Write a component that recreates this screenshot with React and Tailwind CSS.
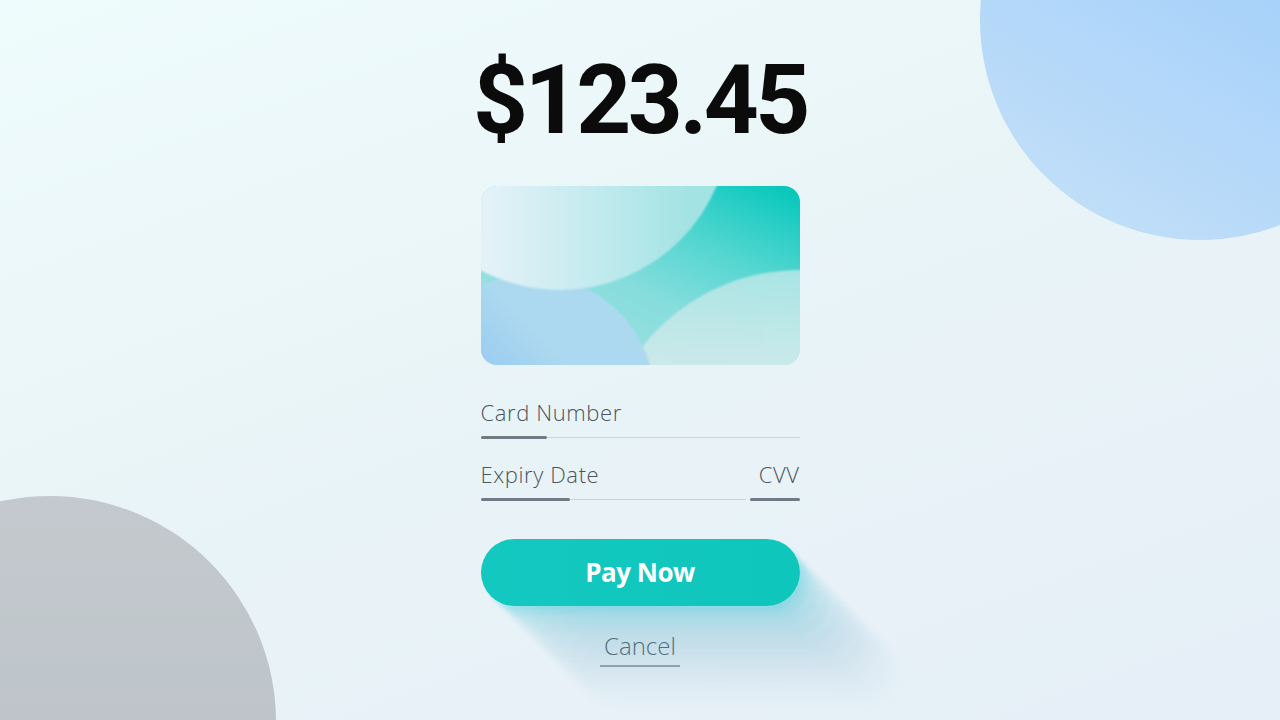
import React from "react";

// long shadow for the pay button, stacked layers running down-right
const payShadow =
  "shadow-[4px_4px_4px_rgba(40,205,215,0.16),10px_10px_4px_rgba(50,200,215,0.12),18px_18px_5px_rgba(60,195,212,0.10),28px_28px_5px_rgba(75,190,210,0.09),40px_40px_6px_rgba(90,185,208,0.08),52px_52px_6px_rgba(100,180,206,0.07),64px_64px_7px_rgba(110,178,205,0.06),76px_76px_8px_rgba(120,178,205,0.05),88px_88px_9px_rgba(130,180,208,0.04),100px_100px_10px_rgba(140,182,210,0.03)]";

function Field({ label, bar, right, rightBar }) {
  return (
    <div className="w-full">
      <div className="flex items-baseline justify-between text-[22px] font-[350] leading-[28px] tracking-[0.6px] text-[#4a5560]">
        <span>{label}</span>
        {right && <span>{right}</span>}
      </div>
      <div className="mt-[10px] flex items-center">
        <div className="h-[3px] rounded-full bg-[#6f7a84]" style={{ width: bar }} />
        <div className="h-px flex-1 bg-[#c9d4db]" />
        {right && <div className="ml-[4px] h-[3px] rounded-full bg-[#6f7a84]" style={{ width: rightBar }} />}
      </div>
    </div>
  );
}

function Card() {
  return (
    <div className="relative mt-[38px] h-[179px] w-[319px] overflow-hidden rounded-[16px] bg-[linear-gradient(205deg,#00c6b8_0%,#2ccfc6_16%,#55d6d1_32%,#86dddc_55%,#a9e3e4_100%)]">
      <div className="absolute left-[119px] top-[84px] h-[400px] w-[400px] rounded-full bg-[linear-gradient(180deg,#b3e7e6_0%,#d3ebed_25%,#e2edef_45%)] opacity-90 blur-[1px]" />
      <div className="absolute left-[-76px] top-[89px] h-[250px] w-[250px] rounded-full bg-[linear-gradient(45deg,#78b2f6_15%,#8fc3f4_35%,#acd9ef_65%)] blur-[1px]" />
      <div className="absolute left-[-91px] top-[-236px] h-[340px] w-[340px] rounded-full bg-[linear-gradient(90deg,#e4f2f8_28%,#c3ebef_60%,#a3e3e3_88%)] blur-[1px]" />
    </div>
  );
}

export default function App() {
  return (
    <div className="relative h-[720px] w-full overflow-hidden bg-[linear-gradient(160deg,#effcfc_0%,#e9f4f7_45%,#e6eff7_100%)] font-['Open_Sans',sans-serif]">
      <div className="absolute left-[980px] top-[-200px] h-[440px] w-[440px] rounded-full bg-[linear-gradient(210deg,#9dccfb_0%,#acd4fa_50%,#c6e1f7_100%)]" />
      <div className="absolute left-[-176px] top-[496px] h-[452px] w-[452px] rounded-full bg-[linear-gradient(180deg,#c3c9cd_0%,#bac2c8_100%)]" />

      <div className="relative flex flex-col items-center pt-[52px]">
        <h1 className="font-['Roboto',sans-serif] text-[96px] font-bold leading-none tracking-[-3.5px] text-[#0b0b0b]">
          $123.45
        </h1>

        <Card />

        <div className="mt-[33px] w-[319px]">
          <Field label="Card Number" bar="66px" />
          <div className="mt-[21px]">
            <Field label="Expiry Date" bar="89px" right="CVV" rightBar="50px" />
          </div>
        </div>

        <button
          className={`mt-[38px] h-[67px] w-[319px] rounded-full bg-[linear-gradient(90deg,#12c8c0,#0fc6bc)] text-[26px] font-bold tracking-[-0.5px] text-white ${payShadow}`}
        >
          Pay Now
        </button>

        <button className="relative mt-[26px] border-b-2 border-[#8ea3ab] px-[4px] pb-[5px] text-[24px] font-[350] leading-[28px] text-[#557079]">
          Cancel
        </button>
      </div>
    </div>
  );
}
